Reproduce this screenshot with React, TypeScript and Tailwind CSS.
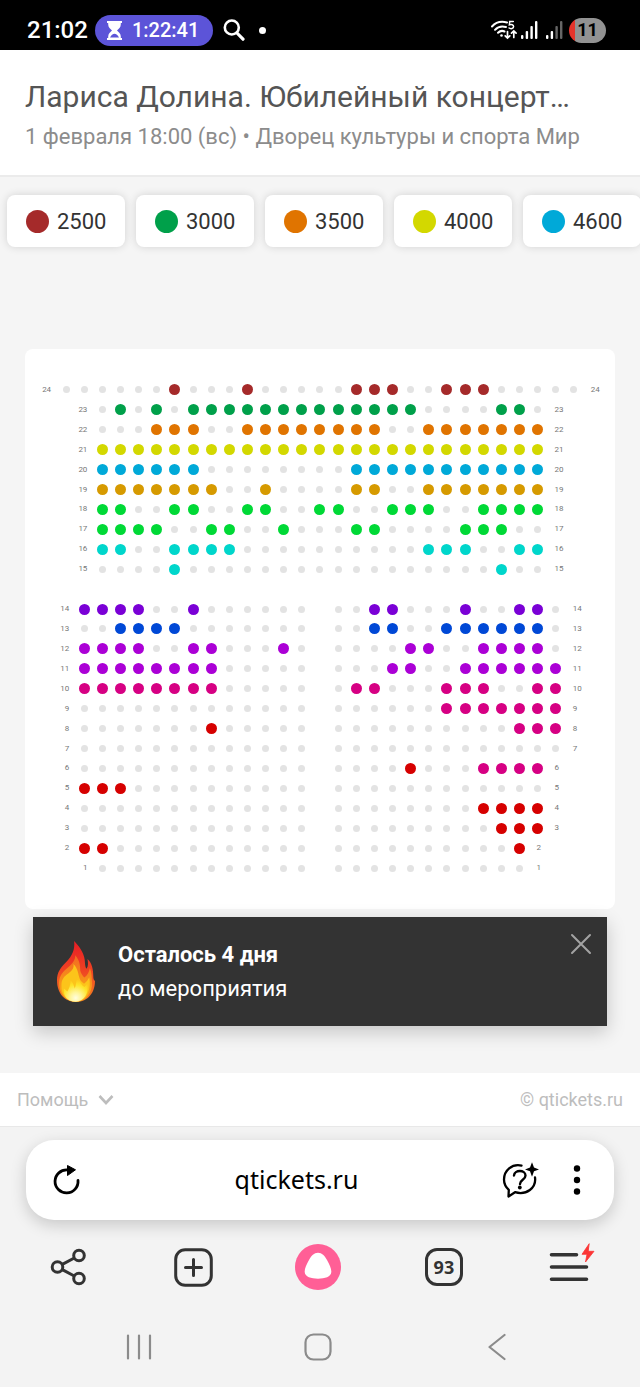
import React, { useState } from "react";

type Span = { from: number; to: number; color?: string };

interface SeatRow {
  row: number;
  blocks: [number, number][];
  color?: string;
  free: Span[];
}

const BROWN = "bg-[#a52a2a]";
const GREEN = "bg-[#00a04a]";
const ORANGE = "bg-[#e07400]";
const YELLOW = "bg-[#d3d800]";
const CYAN = "bg-[#00a9d8]";
const GOLD = "bg-[#d69a00]";
const LIME = "bg-[#00d936]";
const TURQUOISE = "bg-[#00d6cb]";
const VIOLET = "bg-[#7a00d6]";
const BLUE = "bg-[#0048d6]";
const PURPLE = "bg-[#ab00d6]";
const PINK = "bg-[#d60083]";
const RED = "bg-[#d60000]";

const PRICES = [
  { value: 2500, color: BROWN },
  { value: 3000, color: GREEN },
  { value: 3500, color: ORANGE },
  { value: 4000, color: YELLOW },
  { value: 4600, color: CYAN },
];

// seats are numbered by grid column, 0..28
const COLUMNS = Array.from({ length: 31 }, (_, i) => i - 1);

const s = (from: number, to: number = from, color?: string): Span => ({ from, to, color });

const ROWS: (SeatRow | null)[] = [
  { row: 24, blocks: [[0, 28]], color: BROWN, free: [s(6), s(10), s(16, 18), s(21, 23)] },
  { row: 23, blocks: [[2, 26]], color: GREEN, free: [s(3), s(5), s(7, 19), s(24, 25)] },
  { row: 22, blocks: [[2, 26]], color: ORANGE, free: [s(5, 7), s(10, 17), s(20, 26)] },
  { row: 21, blocks: [[2, 26]], color: YELLOW, free: [s(2, 26)] },
  { row: 20, blocks: [[2, 26]], color: CYAN, free: [s(2, 7), s(16, 26)] },
  { row: 19, blocks: [[2, 26]], color: GOLD, free: [s(2, 8), s(11), s(16, 17), s(20, 26)] },
  { row: 18, blocks: [[2, 26]], color: LIME, free: [s(2, 3), s(6, 7), s(10, 11), s(14, 15), s(18, 20), s(23, 26)] },
  { row: 17, blocks: [[2, 26]], color: LIME, free: [s(2, 5), s(8, 9), s(12), s(16, 17), s(22, 24)] },
  { row: 16, blocks: [[2, 26]], color: TURQUOISE, free: [s(2, 3), s(6, 9), s(20, 22), s(25, 26)] },
  { row: 15, blocks: [[2, 26]], color: TURQUOISE, free: [s(6), s(24)] },
  null,
  { row: 14, blocks: [[1, 13], [15, 27]], color: VIOLET, free: [s(1, 4), s(7), s(17, 18), s(22), s(25, 26)] },
  { row: 13, blocks: [[1, 13], [15, 27]], color: BLUE, free: [s(3, 6), s(17, 18), s(21, 26)] },
  { row: 12, blocks: [[1, 13], [15, 27]], color: PURPLE, free: [s(1, 4), s(7, 8), s(12), s(19, 20), s(23, 26)] },
  { row: 11, blocks: [[1, 13], [15, 27]], color: PURPLE, free: [s(1, 8), s(18, 19), s(22, 27)] },
  { row: 10, blocks: [[1, 13], [15, 27]], color: PINK, free: [s(1, 8), s(16, 17), s(21, 23), s(26, 27)] },
  { row: 9, blocks: [[1, 13], [15, 27]], color: PINK, free: [s(21, 27)] },
  { row: 8, blocks: [[1, 13], [15, 27]], color: PINK, free: [s(8, 8, RED), s(25, 27)] },
  { row: 7, blocks: [[1, 13], [15, 27]], free: [] },
  { row: 6, blocks: [[1, 13], [15, 26]], color: PINK, free: [s(19, 19, RED), s(23, 26)] },
  { row: 5, blocks: [[1, 13], [15, 26]], color: RED, free: [s(1, 3)] },
  { row: 4, blocks: [[1, 13], [15, 26]], color: RED, free: [s(23, 26)] },
  { row: 3, blocks: [[1, 13], [15, 26]], color: RED, free: [s(24, 26)] },
  { row: 2, blocks: [[1, 13], [15, 25]], color: RED, free: [s(1, 2), s(25)] },
  { row: 1, blocks: [[2, 13], [15, 25]], free: [] },
];

const SignalIcon: React.FC<{ level: number }> = ({ level }) => (
  <svg width="17" height="18" viewBox="0 0 17 18" fill="#fff">
    <rect x="0" y="14" width="2.4" height="4" rx="1" />
    <rect x="4.7" y="10" width="2.4" height="8" rx="1" />
    <rect x="9.4" y="5" width="2.4" height="13" rx="1" opacity={level > 2 ? 1 : 0.4} />
    <rect x="14" y="0" width="2.4" height="18" rx="1" opacity={level > 3 ? 1 : 0.4} />
  </svg>
);

const StatusBar: React.FC = () => (
  <div className="flex h-[50px] items-center bg-black pt-2.5 pr-[34px] pl-[27px] text-white">
    <span className="text-2xl font-medium">21:02</span>
    <div className="ml-[7px] flex h-[31px] items-center gap-2.5 rounded-full bg-[#5c54d8] pr-3.5 pl-3">
      <svg width="15" height="19" viewBox="0 0 15 19" fill="#fff">
        <path d="M0 0h15v2h-1.200v1.500c0 3-2.200 4.500-3.800 6 1.600 1.500 3.800 3 3.800 6V17H15v2H0v-2h1.200v-1.500c0-3 2.200-4.500 3.800-6C3.400 8 1.200 6.500 1.200 3.500V2H0z" />
        <path d="M3 16.500c1-2.500 3-3.500 4.500-3.800 1.500.3 3.500 1.300 4.500 3.800z" fill="#5c54d8" />
      </svg>
      <span className="text-[20px] font-medium">1:22:41</span>
    </div>
    <svg className="ml-2.5" width="22" height="22" viewBox="0 0 22 22" fill="none" stroke="#fff" strokeLinecap="round">
      <circle cx="8.800" cy="8.500" r="7" strokeWidth="2.600" />
      <path d="M14 14l6 6.200" strokeWidth="3.200" />
    </svg>
    <span className="ml-3.5 size-[7px] rounded-full bg-white" />
    <div className="ml-auto flex items-center">
      <svg width="26" height="20" viewBox="0 0 26 20" fill="none" stroke="#fff" strokeWidth="2" strokeLinecap="round">
        <path d="M1 6.500C5 2 10 1 16 2.500" />
        <path d="M4 9.800C7 6.500 11 5.800 15 7" />
        <path d="M7 12.800c2-2 4.500-2.300 6.500-1.300" />
        <circle cx="10.500" cy="15.500" r="1.300" fill="#fff" stroke="none" />
        <path d="M22.300 1.500h-3.600l-.3 3.400c2-.9 4.200-.2 4.200 1.700 0 2-2.800 2.600-4.500 1.400" strokeWidth="1.500" />
        <path d="M16.500 11.500v6.500m-2.300-2.200l2.300 2.300 2.300-2.300M22.800 17.500V11m-2.300 2.200l2.300-2.300 2.300 2.300" strokeWidth="1.700" />
      </svg>
      <div className="ml-1 flex items-center gap-2">
        <SignalIcon level={4} />
        <SignalIcon level={2} />
      </div>
      <div className="ml-1.5 flex h-[25px] w-[37px] items-center justify-center rounded-full bg-linear-to-r from-[#e5342b] from-16% to-[#929292] to-16% text-lg font-bold text-black">
        11
      </div>
    </div>
  </div>
);

const SeatMap: React.FC = () => {
  const [selected, setSelected] = useState<string[]>([]);

  const toggle = (id: string) =>
    setSelected((prev) => (prev.includes(id) ? prev.filter((x) => x !== id) : [...prev, id]));

  const renderCell = (item: SeatRow, col: number) => {
    const first = item.blocks[0][0];
    const last = item.blocks[item.blocks.length - 1][1];

    if (col === first - 1) {
      return <span className="w-full pr-1.5 text-right">{item.row}</span>;
    }
    if (col === last + 1) {
      return <span className="w-full pl-2 text-left">{item.row}</span>;
    }
    if (!item.blocks.some(([from, to]) => col >= from && col <= to)) {
      return null;
    }
    const span = item.free.find((f) => col >= f.from && col <= f.to);
    if (!span) {
      return <span className="size-[7px] rounded-full bg-[#e3e3e3]" />;
    }
    const id = `${item.row}-${col}`;
    return (
      <button
        type="button"
        aria-label={`Ряд ${item.row}, место ${col - first + 1}`}
        aria-pressed={selected.includes(id)}
        onClick={() => toggle(id)}
        className={`size-[11px] shrink-0 rounded-full aria-pressed:ring-2 aria-pressed:ring-gray-400 ${span.color ?? item.color}`}
      />
    );
  };

  return (
    <div className="mx-[25px] rounded-lg bg-white px-3.5 py-[31px]">
      <div className="grid aspect-[562/498] grid-cols-[repeat(31,minmax(0,1fr))] grid-rows-[repeat(25,minmax(0,1fr))] text-[8px] leading-none text-[#777]">
        {ROWS.map((item, index) =>
          COLUMNS.map((col) => (
            <div key={`${index}-${col}`} className="flex items-center justify-center">
              {item && renderCell(item, col)}
            </div>
          ))
        )}
      </div>
    </div>
  );
};

const FlameIcon: React.FC = () => (
  <svg width="38" height="61" viewBox="0 0 111 180" preserveAspectRatio="none">
    <defs>
      <linearGradient id="flameOuter" x1="0" y1="0" x2="0" y2="1">
        <stop offset="0" stopColor="#e91d25" />
        <stop offset="0.45" stopColor="#ee4023" />
        <stop offset="1" stopColor="#f58220" />
      </linearGradient>
      <linearGradient id="flameMid" x1="0" y1="0" x2="0" y2="1">
        <stop offset="0" stopColor="#f26a21" />
        <stop offset="1" stopColor="#fbb116" />
      </linearGradient>
      <radialGradient id="flameCore" cx="0.5" cy="0.85" r="0.75">
        <stop offset="0" stopColor="#fffde0" />
        <stop offset="0.3" stopColor="#fff59a" />
        <stop offset="0.7" stopColor="#fee52b" />
        <stop offset="1" stopColor="#fdc51a" />
      </radialGradient>
    </defs>
    <path
      d="M50 0C62 12 79 34 81 56C82 68 82 76 86 82C92 74 91 64 89 53C102 64 106 84 106 104C106 112 108 116 111 118C111 150 92 180 55 180C22 180 0 154 0 116C0 92 11 78 27 62C44 44 53 26 50 0Z"
      fill="url(#flameOuter)"
    />
    <path
      d="M53 42C66 56 68 72 68 88C70 96 75 103 80 108C89 102 94 91 96 80C102 94 101 106 102 122C104 154 84 178 55 179C26 178 6 155 6 124C6 102 18 90 32 78C46 66 54 56 53 42Z"
      fill="url(#flameMid)"
    />
    <path
      d="M48 68C62 82 62 100 67 113C70 119 74 123 79 126C86 121 91 114 94 107C101 140 88 178 55 179C26 178 12 158 13 130C13 112 22 103 34 95C46 86 50 78 48 68Z"
      fill="#fcc41a"
    />
    <path
      d="M39 115C47 122 49 132 52 140C56 131 55 118 61 106C66 120 72 131 80 136C84 132 87 128 89 124C94 153 80 179 55 179C31 179 17 162 20 140C24 143 27 146 30 149C36 139 40 128 39 115Z"
      fill="url(#flameCore)"
    />
  </svg>
);

const CountdownToast: React.FC<{ onClose: () => void }> = ({ onClose }) => (
  <div className="mx-[33px] mt-2 flex h-[109px] items-start bg-[#333] pr-[15px] pl-6 text-white shadow-[0_6px_18px_rgba(0,0,0,0.2)]">
    <div className="flex items-center gap-[23px] self-center">
      <FlameIcon />
      <div className="text-[22px] leading-[34px]">
        <p className="font-bold">Осталось 4 дня</p>
        <p>до мероприятия</p>
      </div>
    </div>
    <button type="button" aria-label="Закрыть" onClick={onClose} className="mt-4 ml-auto">
      <svg width="22" height="22" viewBox="0 0 22 22" fill="none" stroke="#a3a3a3" strokeWidth="2" strokeLinecap="round">
        <path d="M2 2l18 18M20 2L2 20" />
      </svg>
    </button>
  </div>
);

const AddressBar: React.FC = () => (
  <div className="mx-[26px] mt-[13px] flex h-20 items-center rounded-[28px] bg-white pr-[31px] pl-[26px] text-black shadow-[0_5px_16px_rgba(0,0,0,0.18)]">
    <button type="button" aria-label="Обновить">
      <svg width="30" height="32" viewBox="0 0 30 32" fill="none">
        <path d="M26 16.500A11.500 11.500 0 1 1 15.500 6" stroke="#000" strokeWidth="2.800" strokeLinecap="round" />
        <path d="M15.500 1.500l8 4.300-8 5.700z" fill="#000" stroke="#000" strokeLinejoin="round" />
      </svg>
    </button>
    <input
      type="text"
      aria-label="Адрес"
      defaultValue="qtickets.ru"
      className="ml-2.5 min-w-0 flex-1 bg-transparent text-center font-['Noto_Sans',sans-serif] text-[25px] outline-none"
    />
    <button type="button" aria-label="Спросить">
      <svg width="38" height="36" viewBox="0 0 38 36" fill="none" stroke="#000" strokeLinecap="round" strokeLinejoin="round">
        <path d="M20.500 3.600C11 1.500 3 8.500 3 17.500c0 5 2.200 8 4.800 10.400L7.500 34.500l6.500-4.300C25.500 33.500 35.500 26 34 15.500" strokeWidth="2.300" />
        <path d="M13 13.500c.3-6 11.500-6 11.500 0 0 4.500-5.500 4-5.500 8.500" strokeWidth="2.400" />
        <circle cx="18.800" cy="25.500" r="1.900" fill="#000" stroke="none" />
        <path d="M31 .3l2 5.200 5 1.900-5 1.900-2 5.400-2-5.400-5-1.900 5-1.900z" fill="#000" stroke="none" />
      </svg>
    </button>
    <button type="button" aria-label="Меню страницы" className="ml-8">
      <svg width="12" height="32" viewBox="0 0 12 32">
        <circle cx="6" cy="4.500" r="3.200" />
        <circle cx="6" cy="16" r="3.200" />
        <circle cx="6" cy="27.500" r="3.200" />
      </svg>
    </button>
  </div>
);

const Toolbar: React.FC = () => (
  <div className="grid h-[94px] grid-cols-5 items-center justify-items-center pr-2 pl-[5px] text-[#333]">
    <button type="button" aria-label="Поделиться">
      <svg width="38" height="38" viewBox="0 0 38 38" fill="none" stroke="currentColor" strokeWidth="3">
        <circle cx="8.500" cy="19" r="5.300" />
        <circle cx="30" cy="7.500" r="5.300" />
        <circle cx="30" cy="30.500" r="5.300" />
        <path d="M13.300 16.400l12-6.400M13.300 21.600l12 6.400" />
      </svg>
    </button>
    <button type="button" aria-label="Новая вкладка">
      <svg width="39" height="39" viewBox="0 0 39 39" fill="none" stroke="currentColor" strokeWidth="3" strokeLinecap="round">
        <rect x="1.700" y="1.700" width="35.600" height="35.600" rx="9.500" />
        <path d="M19.500 11.500v16M11.500 19.500h16" />
      </svg>
    </button>
    <button type="button" aria-label="Алиса">
      <svg width="46" height="46" viewBox="0 0 46 46">
        <circle cx="23" cy="23" r="23" fill="#ff5f96" />
        <path
          d="M23 8.800c4 0 6.600 3 9 7.200 2.600 4.500 4.500 8.800 4.300 12.100-.2 4.900-6.500 6.700-13.300 6.700S9.900 33 9.700 28.100c-.2-3.300 1.700-7.600 4.300-12.100 2.400-4.200 5-7.200 9-7.200z"
          fill="#fff"
        />
      </svg>
    </button>
    <button
      type="button"
      aria-label="Вкладки"
      className="flex size-[38px] items-center justify-center rounded-xl border-3 border-[#333] font-['Noto_Sans',sans-serif] text-lg font-bold"
    >
      93
    </button>
    <button type="button" aria-label="Меню">
      <svg
        className="overflow-visible"
        width="46"
        height="40"
        viewBox="0 0 46 40"
        fill="none"
        stroke="currentColor"
        strokeWidth="3.600"
        strokeLinecap="round"
      >
        <path d="M5.500 7.800h25M5.500 20h35M5.500 32.200h35" />
        <path d="M43-3L36 7.300h5L39.500 15 48 4.300h-5.500z" fill="#fb3535" stroke="#fb3535" strokeWidth="0.800" strokeLinejoin="round" />
      </svg>
    </button>
  </div>
);

const SystemNav: React.FC = () => (
  <div className="grid h-[66px] grid-cols-3 items-center justify-items-center pr-[54px] pl-[49px]">
    <button type="button" aria-label="Недавние">
      <svg width="26" height="26" viewBox="0 0 26 26" stroke="#8b8b8b" strokeWidth="2.200" strokeLinecap="round">
        <path d="M2 1.500v23M13 1.500v23M24 1.500v23" />
      </svg>
    </button>
    <button type="button" aria-label="Домой">
      <svg width="28" height="28" viewBox="0 0 28 28" fill="none" stroke="#8b8b8b" strokeWidth="2.200">
        <rect x="1.500" y="1.500" width="25" height="25" rx="8" />
      </svg>
    </button>
    <button type="button" aria-label="Назад">
      <svg width="18" height="28" viewBox="0 0 18 28" fill="none" stroke="#8b8b8b" strokeWidth="2.200" strokeLinecap="round" strokeLinejoin="round">
        <path d="M16.500 2L1.500 14l15 12" />
      </svg>
    </button>
  </div>
);

const App: React.FC = () => {
  const [showToast, setShowToast] = useState(true);

  return (
    <div className="min-h-screen overflow-hidden bg-[#f3f3f3] font-[Roboto,sans-serif]">
      <StatusBar />

      <header className="border-b-2 border-[#ebebeb] bg-white px-[25px] pt-[27px] pb-[18px]">
        <h1 className="truncate text-[30px] leading-10 text-[#555]">Лариса Долина. Юбилейный концерт…</h1>
        <p className="truncate text-[22px] leading-10 text-[#8c8c8c]">
          1 февраля 18:00 (вс) • Дворец культуры и спорта Мир
        </p>
      </header>

      <main className="bg-[#f5f5f5]">
        {/* price filter */}
        <div className="flex gap-[11px] overflow-hidden px-[7px] pt-[18px] pb-[102px]">
          {PRICES.map((price) => (
            <button
              key={price.value}
              type="button"
              className="flex h-[52px] w-[118px] shrink-0 items-center gap-2 rounded-lg bg-white pl-[19px] text-[22px] text-[#333] shadow-[0_0_8px_rgba(0,0,0,0.14)]"
            >
              <span className={`size-[23px] rounded-full ${price.color}`} />
              {price.value}
            </button>
          ))}
        </div>

        <SeatMap />
        {showToast && <CountdownToast onClose={() => setShowToast(false)} />}

        <footer className="mt-[47px] flex h-[54px] items-center justify-between border-b border-[#e8e8e8] bg-white px-[17px] text-lg text-[#bdbdbd]">
          <button type="button" className="flex items-center gap-2.5">
            Помощь
            <svg width="16" height="12" viewBox="0 0 16 12" fill="none" stroke="#bdbdbd" strokeWidth="2.600">
              <path d="M1.500 2L8 9l6.500-7" />
            </svg>
          </button>
          <a href="#">© qtickets.ru</a>
        </footer>
      </main>

      <AddressBar />
      <Toolbar />
      <SystemNav />
    </div>
  );
};

export default App;
